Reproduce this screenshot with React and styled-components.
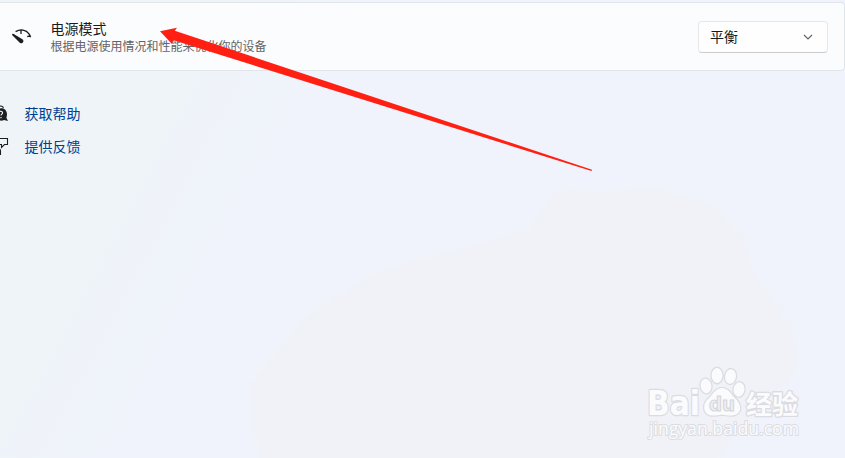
import React from 'react';
import styled, { createGlobalStyle } from 'styled-components';

const GlobalStyle = createGlobalStyle`
	* {
		box-sizing: border-box;
	}

	body {
		margin: 0;
		overflow: hidden;
		font-family: 'Noto Sans CJK SC', sans-serif;
		font-size: 14px;
		color: #1a1a1a;
	}

	p {
		margin: 0;
	}
`;

const Page = styled.main`
	position: relative;
	width: 845px;
	height: 458px;
	padding-top: 2px;
	overflow: hidden;
	background: linear-gradient(118deg, #eef4f7 0%, #eef4f8 18%, #f0f3fb 32%, #f0f3fb 100%);
`;

const Overlay = styled.svg`
	position: absolute;
	top: 0;
	left: 0;
	width: 845px;
	height: 458px;
	pointer-events: none;
`;

const SettingCard = styled.section`
	position: relative;
	display: flex;
	align-items: center;
	height: 69px;
	padding: 0 16px 0 11px;
	border: 1px solid #e0e5ea;
	border-left: none;
	border-radius: 0 4px 4px 0;
	background-color: #fbfcfe;
`;

const GaugeIcon = styled.svg`
	flex: none;
	width: 22px;
	height: 18px;
	margin-right: 17.5px;
`;

const SettingText = styled.div`
	flex: 1;
`;

const SettingTitle = styled.p`
	margin-top: -1px;
	line-height: 18px;
`;

const SettingDesc = styled.p`
	font-size: 12px;
	line-height: 17px;
	color: #636466;
`;

const Select = styled.button`
	display: flex;
	align-items: center;
	justify-content: space-between;
	width: 130px;
	height: 32px;
	padding: 0 14px 0 11px;
	border: 1px solid #e6e7e9;
	border-bottom-color: #cbccce;
	border-radius: 4px;
	background-color: #fefefe;
	font: inherit;
	color: inherit;

	span {
		padding-bottom: 2px;
	}
`;

const Links = styled.nav`
	padding-top: 25px;
`;

const HelpLink = styled.a`
	display: flex;
	align-items: center;
	height: 33px;
	color: #003e92;

	svg {
		flex: none;
		width: 12px;
		height: 20px;
		margin-right: 12.5px;
	}
`;

const Watermark = styled.svg`
	position: absolute;
	right: 30px;
	bottom: 8px;
	width: 180px;
	height: 95px;
`;

const App = () => {
	return (
		<>
			<GlobalStyle />
			<Page>
				<Overlay viewBox='0 0 845 458'>
					<filter id='soften'>
						<feGaussianBlur stdDeviation='5' />
					</filter>
					<path
						d='M558 190L529 230L471 248L422 259L373 275L307 317L275 355L249 387L254 430L266 475H705L730 440L796 370L792 330L755 280L743 237L714 207L652 188L600 194Z'
						fill='#f1f2f7'
						filter='url(#soften)'
					/>
				</Overlay>

				<SettingCard>
					<GaugeIcon viewBox='0 0 22 18' fill='none'>
						<path
							d='M4.6 3.6C9.5 .7 15.2 1.6 18 5.8C18.6 6.8 19.2 8 19.6 9.2M10 2.2V6M16.2 8.6L19.6 7.6'
							stroke='#1d1e20'
							strokeWidth='1.3'
						/>
						<path
							d='M1 6.2C1.3 5.5 2 5.5 2.7 6L11.4 11.2C13.4 12.6 12.3 15.7 9.7 15.2C8.9 15 8.5 14.5 8 14L1.3 7.3Z'
							fill='#1d1e20'
						/>
					</GaugeIcon>
					<SettingText>
						<SettingTitle>电源模式</SettingTitle>
						<SettingDesc>根据电源使用情况和性能来优化你的设备</SettingDesc>
					</SettingText>
					<Select>
						<span>平衡</span>
						<svg width='10' height='6' viewBox='0 0 10 6' fill='none'>
							<path d='M1 1L5 5L9 1' stroke='#606164' strokeWidth='1.1' />
						</svg>
					</Select>
				</SettingCard>

				<Links>
					<HelpLink>
						<svg viewBox='0 0 12 20' fill='none'>
							<path d='M-1 3.5C1 2.3 3 3.4 3.4 5' stroke='#1d1e20' strokeWidth='1.1' />
							<path
								d='M0 5.5C4 4.5 7 7.5 7 11.3C7 12.6 6.8 13.7 6.4 14.7L8 18L4 17.1C2.8 17.7 1.3 17.8 0 17.6Z'
								fill='#1d1e20'
							/>
							<path
								d='M-.5 8.7C1 7.7 2.7 8.6 2.5 10C2.4 11.1 1 11.2 1 12.5M1 14V15.2'
								stroke='#eef4f7'
								strokeWidth='1.2'
							/>
						</svg>
						获取帮助
					</HelpLink>
					<HelpLink>
						<svg viewBox='0 0 12 20' fill='none'>
							<path
								d='M-1 2.5H7.5V8.5H4.5L1.5 11.5V8.5H-1M-1 13C0 13 .5 13.8 .5 15V19'
								stroke='#1d1e20'
								strokeWidth='1.1'
							/>
						</svg>
						提供反馈
					</HelpLink>
				</Links>

				<Watermark viewBox='0 0 180 95'>
					<g
						fill='#fbfbfd'
						stroke='#dbdce1'
						strokeWidth='2.6'
						paintOrder='stroke'
						strokeLinejoin='round'
					>
						<text
							x='12'
							y='60'
							fontFamily='DejaVu Sans'
							fontSize='34'
							fontWeight='700'
							textLength='53'
							lengthAdjust='spacingAndGlyphs'
						>
							Bai
						</text>
						<ellipse cx='71' cy='31' rx='5.4' ry='7.2' transform='rotate(-8 71 31)' />
						<ellipse cx='82' cy='20.5' rx='5.4' ry='7.6' />
						<ellipse cx='95.5' cy='21.5' rx='5.4' ry='7.4' transform='rotate(8 95.5 21.5)' />
						<ellipse cx='104' cy='34.5' rx='5.4' ry='7.2' transform='rotate(10 104 34.5)' />
						<path d='M87 33C92 33 95 37 98 41C102 45 106 49 105 55C102 62 95 61 87 59.5C79 61 72 62 69.5 55C68 48 72 45 76 41C79 37 82 33 87 33Z' />
						<text
							x='111'
							y='58.5'
							fontFamily='Noto Sans CJK SC'
							fontSize='26'
							fontWeight='700'
							textLength='52'
							lengthAdjust='spacingAndGlyphs'
						>
							经验
						</text>
						<text
							x='14'
							y='80'
							fontFamily='Open Sans'
							fontSize='18'
							strokeWidth='2'
							textLength='150'
							lengthAdjust='spacingAndGlyphs'
						>
							jingyan.baidu.com
						</text>
					</g>
					<text
						x='74'
						y='56'
						fontFamily='DejaVu Sans'
						fontSize='20'
						fontWeight='700'
						fill='#eeeff3'
						stroke='#d5d6dc'
						strokeWidth='1.2'
						textLength='26'
						lengthAdjust='spacingAndGlyphs'
					>
						du
					</text>
				</Watermark>

				<Overlay viewBox='0 0 845 458'>
					<path d='M160 31.2L177 27.8L174.8 30.8L592 169.8L591.5 171L173.5 40.3L171.7 43.8Z' fill='#ff2013' />
				</Overlay>
			</Page>
		</>
	);
};

export default App;
